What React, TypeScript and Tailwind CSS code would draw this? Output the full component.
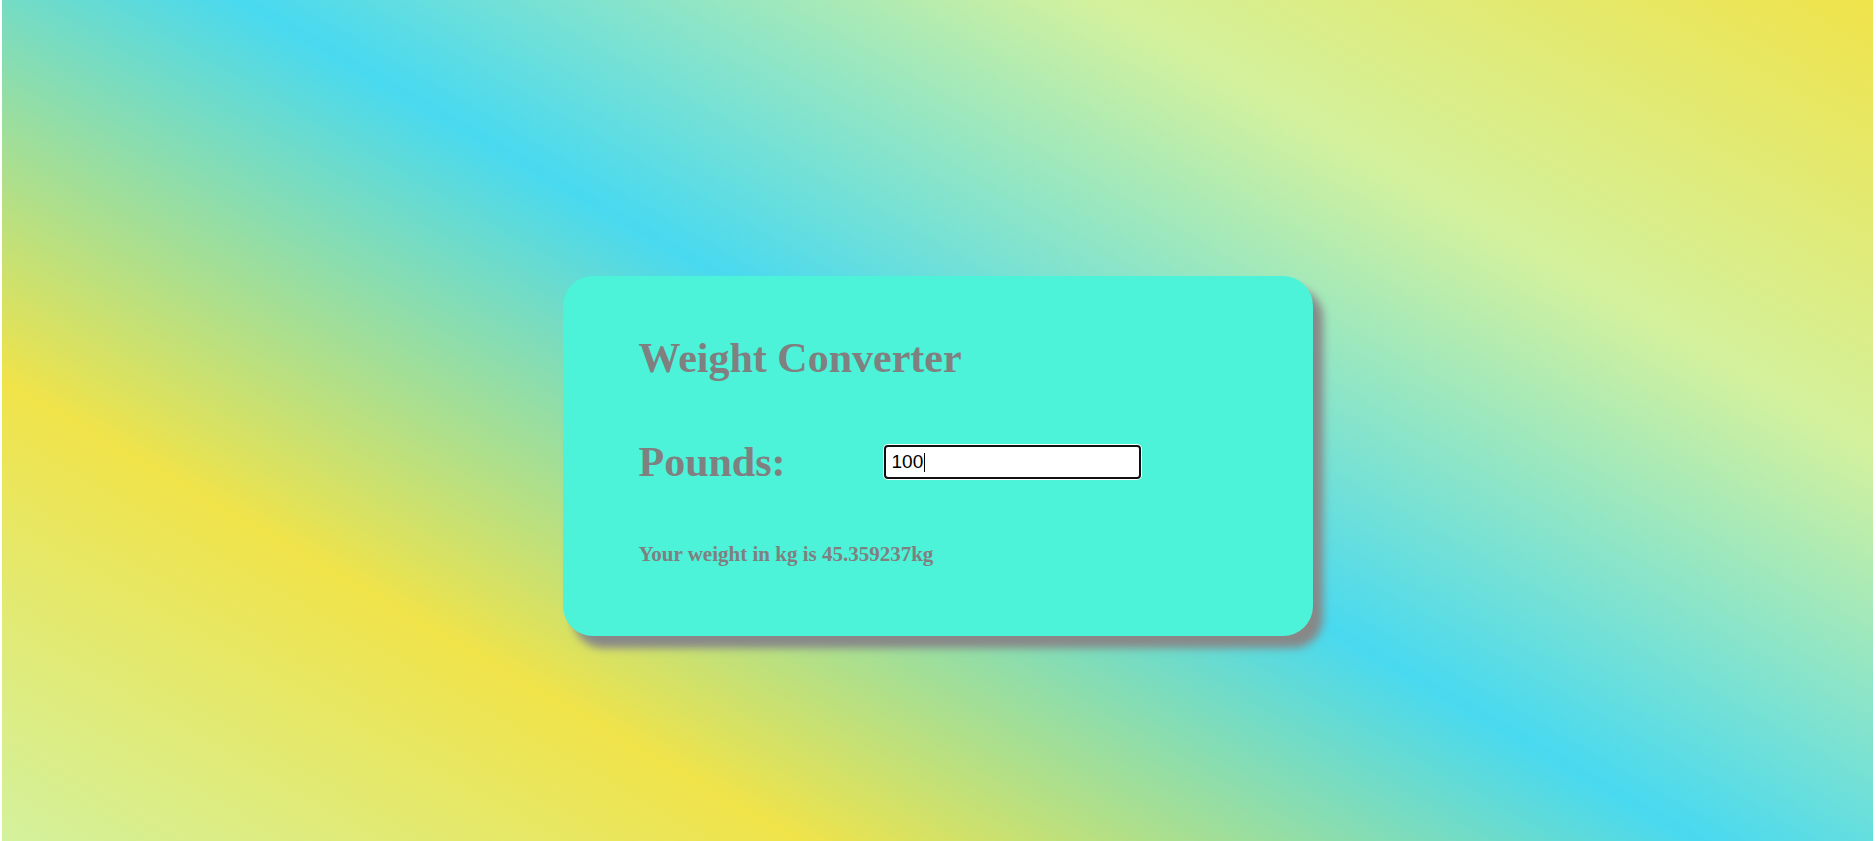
export default function App() {
  return (
    <div className="h-screen w-full bg-white pl-[2px] pr-[3px]">
      <div className="flex h-full justify-center bg-[linear-gradient(30deg,#d3f19d_0%,#f0e34a_24%,#48d9f0_51%,#d3f19d_76.5%,#f0e34a_100%)] pt-[276px]">
        <div
          className="flex h-[360px] w-[750px] flex-col rounded-[30px] bg-[#4cf3d9] pl-[76px] pt-[58px] shadow-[10px_12px_8px_#888]"
          style={{ fontFamily: '"Liberation Serif", "Times New Roman", serif' }}
        >
          <h1 className="text-[42px] font-bold leading-[48px] text-[#808080]">Weight Converter</h1>
          <div className="mt-[56px] flex items-center">
            <label className="w-[245px] text-[42px] font-bold leading-[48px] text-[#808080]">Pounds:</label>
            <div className="relative">
              <input
                type="text"
                defaultValue="100"
                className="h-[34px] w-[257px] rounded-[4px] border-2 border-[#101010] bg-white px-[6px] text-[19px] text-black shadow-[0_0_0_1px_#ffffff] outline-none"
                style={{ fontFamily: '"Liberation Sans", Arial, sans-serif' }}
              />
              <span className="absolute left-[40px] top-[8px] h-[19px] w-px bg-black" />
            </div>
          </div>
          <p className="mt-[56px] text-[21px] font-bold leading-[24px] text-[#808080]">
            Your weight in kg is 45.359237kg
          </p>
        </div>
      </div>
    </div>
  )
}
